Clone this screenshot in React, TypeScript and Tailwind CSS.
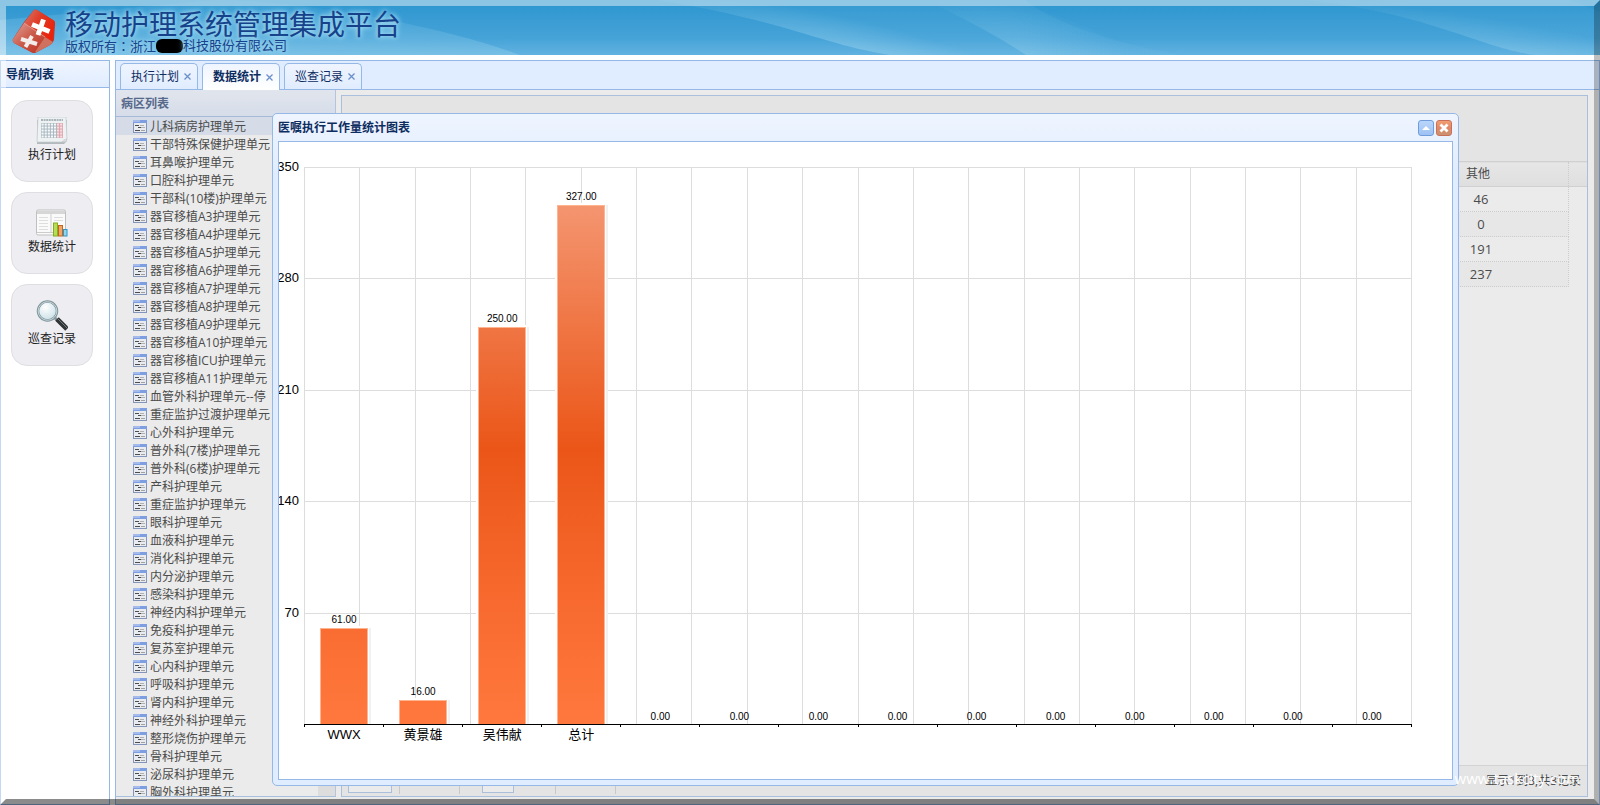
import React from 'react';

const wards: string[] = [
  '儿科病房护理单元',
  '干部特殊保健护理单元',
  '耳鼻喉护理单元',
  '口腔科护理单元',
  '干部科(10楼)护理单元',
  '器官移植A3护理单元',
  '器官移植A4护理单元',
  '器官移植A5护理单元',
  '器官移植A6护理单元',
  '器官移植A7护理单元',
  '器官移植A8护理单元',
  '器官移植A9护理单元',
  '器官移植A10护理单元',
  '器官移植ICU护理单元',
  '器官移植A11护理单元',
  '血管外科护理单元--停',
  '重症监护过渡护理单元',
  '心外科护理单元',
  '普外科(7楼)护理单元',
  '普外科(6楼)护理单元',
  '产科护理单元',
  '重症监护护理单元',
  '眼科护理单元',
  '血液科护理单元',
  '消化科护理单元',
  '内分泌护理单元',
  '感染科护理单元',
  '神经内科护理单元',
  '免疫科护理单元',
  '复苏室护理单元',
  '心内科护理单元',
  '呼吸科护理单元',
  '肾内科护理单元',
  '神经外科护理单元',
  '整形烧伤护理单元',
  '骨科护理单元',
  '泌尿科护理单元',
  '胸外科护理单元',
];

const otherCounts = [46, 0, 191, 237];

const bars: { name: string; value: number }[] = [
  { name: 'WWX', value: 61 },
  { name: '黄景雄', value: 16 },
  { name: '吴伟献', value: 250 },
  { name: '总计', value: 327 },
  ...Array.from({ length: 10 }, () => ({ name: '', value: 0 })),
];

function Logo() {
  return (
    <svg className="h-11 w-11 shrink-0" viewBox="0 0 44 44" aria-hidden="true">
      <defs>
        <linearGradient id="cubeTop" x1="0" y1="0" x2="1" y2="0.6">
          <stop offset="0" stopColor="#d9786c" />
          <stop offset="0.5" stopColor="#e03a24" />
          <stop offset="1" stopColor="#ea220c" />
        </linearGradient>
        <linearGradient id="cubeFront" x1="0" y1="0" x2="1" y2="1">
          <stop offset="0" stopColor="#e2a198" />
          <stop offset="0.5" stopColor="#cb5a4a" />
          <stop offset="1" stopColor="#bb3020" />
        </linearGradient>
      </defs>
      <path d="M22 1 Q23 0 25 1 L41 11 Q43 12 43 14 L42 31 Q41 34 38 36 L25 43 Q22 45 19 43 L2 34 Q0 32 1 30 L12 13 Z" fill="#c23628" />
      <path d="M22 1 Q23 0 25 1 L41 11 Q43 12 43 14 L40 33 L33 28 L12 14 Z" fill="url(#cubeTop)" />
      <path d="M12 14 L33 28 L23 43 Q21 44 19 43 L2 34 Q0 32 1 30 Z" fill="url(#cubeFront)" />
      <path d="M33 28 L41 33 Q40 35 38 36 L25 43 L23 43 Z" fill="#d0705f" />
      <path d="M12 14 L33 28" stroke="#e8a79c" strokeWidth="0.8" />
      <path d="M20 15.500 L37.500 22.500 M31.500 10.500 L26 26" stroke="#ffffff" strokeWidth="5" />
      <path d="M9 30 L25 35 M20 27 L13.500 38" stroke="#f3ecea" strokeWidth="4" />
    </svg>
  );
}

function HeaderWaves() {
  return (
    <svg className="absolute inset-0 h-full w-full" viewBox="0 0 1600 55" preserveAspectRatio="none" aria-hidden="true">
      <defs>
        <radialGradient id="waveA" gradientUnits="userSpaceOnUse" cx="0" cy="0" r="1" gradientTransform="translate(870 62) rotate(14) scale(210 38)">
          <stop offset="0" stopColor="#a9dcf2" stopOpacity="0.5" />
          <stop offset="1" stopColor="#a9dcf2" stopOpacity="0.06" />
        </radialGradient>
        <radialGradient id="waveB" gradientUnits="userSpaceOnUse" cx="0" cy="0" r="1" gradientTransform="translate(1020 55) rotate(12) scale(130 50)">
          <stop offset="0" stopColor="#a9dcf2" stopOpacity="0.3" />
          <stop offset="1" stopColor="#a9dcf2" stopOpacity="0" />
        </radialGradient>
        <radialGradient id="waveC" gradientUnits="userSpaceOnUse" cx="0" cy="0" r="1" gradientTransform="translate(1510 56) rotate(10) scale(230 34)">
          <stop offset="0" stopColor="#a9dcf2" stopOpacity="0.35" />
          <stop offset="1" stopColor="#a9dcf2" stopOpacity="0.05" />
        </radialGradient>
        <linearGradient id="waveLeft" x1="0" y1="1" x2="0.300" y2="0">
          <stop offset="0" stopColor="#a9dcf2" stopOpacity="0.4" />
          <stop offset="1" stopColor="#a9dcf2" stopOpacity="0.05" />
        </linearGradient>
      </defs>
      <path d="M215 0 C300 0 440 25 520 55 L0 55 L0 20 Z" fill="url(#waveLeft)" />
      <path d="M658 0 C790 22 820 44 890 55 L1180 55 C1100 40 1050 20 1025 0 Z" fill="url(#waveA)" />
      <path d="M923 0 C960 15 1000 38 1026 55 L1180 55 C1120 40 1060 20 1025 0 Z" fill="url(#waveB)" />
      <path d="M1305 0 C1430 13 1480 48 1535 55 L1600 55 L1600 12 L1570 0 Z" fill="url(#waveC)" />
    </svg>
  );
}

function CalendarIcon() {
  return (
    <svg className="h-7 w-8" viewBox="0 0 32 28" aria-hidden="true">
      <path d="M1 3 H31 V24 L28 27 H1 Z" fill="#b3b9bc" />
      <path d="M2 0 H30 L31 22 Q31 25 26 25 H1 Z" fill="#eef2f3" stroke="#c3cbcf" strokeWidth="0.7" />
      <path d="M5 3 H27" stroke="#a9b5ba" strokeWidth="2" strokeDasharray="2 0.6" />
      <rect x="5" y="6" width="16" height="15" fill="#a4b4bd" />
      <rect x="21" y="6" width="6" height="15" fill="#d9a0a9" />
      {[0, 1, 2, 3, 4].map((r) =>
        [0, 1, 2, 3, 4, 5, 6].map((c) => (
          <rect key={`${r}-${c}`} x={5.5 + c * 3.1} y={6.5 + r * 3} width="2.2" height="2.1" fill={c > 4 ? '#fbdce1' : '#f7f9fa'} />
        )),
      )}
      <path d="M26 25 Q27 22 31 22 L26 25" fill="#fff" stroke="#b6bdc0" strokeWidth="0.5" />
    </svg>
  );
}

function StatsIcon() {
  return (
    <svg className="h-7 w-8" viewBox="0 0 32 28" aria-hidden="true">
      <rect x="0.5" y="1" width="29" height="25" rx="1.5" fill="#fafafa" stroke="#bfbfbf" />
      <path d="M1 2 H29 V5 H1 Z" fill="#d6d6d6" />
      <path d="M15 5 V24" stroke="#cfcfcf" />
      <path d="M1 23.500 H29" stroke="#cccccc" />
      <path d="M3 8.500 H12 M3 11.500 H12 M3 14.500 H12 M3 17.500 H12 M3 20.500 H12 M18 8.500 H27 M18 11.500 H27" stroke="#dddddd" />
      <rect x="17.500" y="14" width="4" height="13" fill="#b9dc55" stroke="#83ad22" />
      <rect x="22.500" y="16.500" width="4" height="10.500" fill="#f0a765" stroke="#c4651c" />
      <rect x="27.500" y="20.500" width="3.500" height="6.500" fill="#8bd6f2" stroke="#3196c4" />
    </svg>
  );
}

function SearchIcon() {
  return (
    <svg className="h-8 w-8" viewBox="0 0 32 32" aria-hidden="true">
      <defs>
        <radialGradient id="lens" cx="0.4" cy="0.3" r="0.8">
          <stop offset="0" stopColor="#ffffff" />
          <stop offset="1" stopColor="#c3dce4" />
        </radialGradient>
      </defs>
      <path d="M17 17 L22 22" stroke="#8b999d" strokeWidth="3" />
      <path d="M21 20 L31 30" stroke="#303436" strokeWidth="5" />
      <path d="M21 19 L31 29" stroke="#747a7c" strokeWidth="1" />
      <circle cx="11.500" cy="12" r="9.500" fill="url(#lens)" stroke="#80969d" strokeWidth="2.500" />
      <circle cx="11.500" cy="12" r="9.300" fill="none" stroke="#c6d5da" strokeWidth="1" />
    </svg>
  );
}

function WardIcon() {
  return (
    <svg className="h-[13px] w-[14px] shrink-0" viewBox="0 0 14 13" shapeRendering="crispEdges" aria-hidden="true">
      <rect width="14" height="13" fill="#8495bb" />
      <rect x="1" y="3" width="12" height="9" fill="#e8ebf0" />
      <rect width="14" height="3" fill="#7d9ee0" />
      <rect width="7" height="2" fill="#a3baea" />
      <rect x="2" y="5" width="4" height="1" fill="#4d4d4d" />
      <rect x="7" y="5" width="4" height="1" fill="#b0b0b0" />
      <rect x="5" y="7" width="3" height="1" fill="#4d4d4d" />
      <rect x="8" y="7" width="4" height="1" fill="#b0b0b0" />
      <rect x="2" y="10" width="5" height="1" fill="#4d4d4d" />
      <rect x="8" y="10" width="4" height="1" fill="#a0a0a0" />
    </svg>
  );
}

const navItems = [
  { label: '执行计划', icon: <CalendarIcon /> },
  { label: '数据统计', icon: <StatsIcon /> },
  { label: '巡查记录', icon: <SearchIcon /> },
];

function Tab({ label, active = false }: { label: string; active?: boolean }) {
  return (
    <div
      className={
        active
          ? 'relative top-px flex h-[27px] w-[78px] items-center justify-between rounded-t-[5px] border border-b-0 border-[#95b8e7] bg-gradient-to-b from-[#eff5ff] to-white pl-[10px] pr-1'
          : 'flex h-[26px] w-[78px] items-center justify-between rounded-t-[5px] border border-b-0 border-[#95b8e7] bg-gradient-to-b from-[#eff5ff] to-[#e0ecff] pl-[10px] pr-1'
      }
    >
      <button type="button" role="tab" aria-selected={active} className={active ? 'font-bold' : ''}>
        {label}
      </button>
      <button type="button" aria-label={`关闭${label}`} className="flex h-3 w-3 items-center justify-center">
        <svg className="h-[7px] w-[7px]" viewBox="0 0 7 7" aria-hidden="true">
          <path d="M0.500 0.500 L6.500 6.500 M6.500 0.500 L0.500 6.500" stroke="#6a8fca" strokeWidth="1.300" />
        </svg>
      </button>
    </div>
  );
}

function Chart() {
  const left = 25;
  const right = 1132;
  const top = 25;
  const bottom = 582;
  const slot = (right - left) / bars.length;
  const cell = (right - left) / 20;
  const rows = [350, 280, 210, 140, 70];
  return (
    <svg className="block h-full w-full" viewBox="0 0 1173 636" preserveAspectRatio="xMinYMin meet" role="img" aria-label="医嘱执行工作量统计图表">
      <defs>
        <linearGradient id="bar" gradientUnits="userSpaceOnUse" x1="0" y1="62" x2="0" y2={bottom}>
          <stop offset="0" stopColor="#f49570" />
          <stop offset="0.47" stopColor="#eb5618" />
          <stop offset="0.800" stopColor="#f96c31" />
          <stop offset="1" stopColor="#ff783d" />
        </linearGradient>
      </defs>
      <g stroke="#dddddd" shapeRendering="crispEdges">
        {rows.map((v, i) => (
          <path key={v} d={`M${left} ${Math.round(top + i * 111.4) + 0.5} H${right + 1}`} />
        ))}
        {Array.from({ length: 21 }, (_, i) => (
          <path key={i} d={`M${Math.round(left + i * cell) + 0.5} ${top} V${bottom}`} />
        ))}
      </g>
      <g fontFamily="'Liberation Sans', sans-serif" fontSize="13" textAnchor="end">
        {rows.map((v, i) => (
          <text key={v} x="20" y={Math.round(top + i * 111.4) + 4}>
            {v}
          </text>
        ))}
      </g>
      {bars.map((b, i) => {
        const center = left + 0.5 + slot * (i + 0.5);
        const x = Math.round(center) - 24;
        const y = Math.round(bottom - (b.value * (bottom - top)) / 350) + 1;
        return (
          <g key={i}>
            {b.value > 0 && (
              <>
                <rect x={x - 2} y={y - 2} width="53" height={bottom - y + 2} fill="#ffffff" />
                <rect x={x + 49} y={y} width="2" height={bottom - y} fill="#f1f1f1" />
                <rect x={x} y={y} width="48" height={bottom - y} fill="#ffb38f" />
                <rect x={x + 1} y={y + 1} width="46" height={bottom - y - 1} fill="url(#bar)" />
              </>
            )}
            <text x={center} y={y - 5} fontFamily="'Liberation Sans', sans-serif" fontSize="10" textAnchor="middle">
              {b.value.toFixed(2)}
            </text>
            <text x={center} y="597" fontFamily="'Liberation Sans', 'Noto Sans CJK SC', sans-serif" fontSize="13" textAnchor="middle">
              {b.name}
            </text>
          </g>
        );
      })}
      <g stroke="#000000" shapeRendering="crispEdges">
        <path d={`M${left} ${bottom + 0.5} H${right + 1}`} />
        {Array.from({ length: 15 }, (_, i) => (
          <path key={i} d={`M${Math.round(left + i * slot) + 0.5} ${bottom} V${bottom + 3}`} />
        ))}
      </g>
    </svg>
  );
}

function ChartWindow() {
  return (
    <section className="absolute bottom-[19px] left-[272px] right-[141px] top-[113px] flex flex-col rounded-[5px] border border-[#95b8e7] bg-[#e0ecff] bg-gradient-to-b from-[#eff5ff] to-[#e0ecff] to-[60px] px-[5px] pb-[5px]">
      <header className="flex h-[27px] shrink-0 items-center justify-between pr-px">
        <h2 className="pt-px font-bold">医嘱执行工作量统计图表</h2>
        <div className="flex gap-[2px]">
          <button type="button" aria-label="折叠" className="flex h-4 w-4 items-center justify-center rounded-[3px] border border-[#6f9cdc] bg-gradient-to-b from-[#b9d5fb] to-[#9fc2f3]">
            <svg className="h-1 w-2" viewBox="0 0 8 4" aria-hidden="true">
              <path d="M4 0 L8 4 H0 Z" fill="#fff" />
            </svg>
          </button>
          <button type="button" aria-label="关闭" className="flex h-4 w-4 items-center justify-center rounded-[3px] border border-[#c9705a] bg-gradient-to-b from-[#f2a070] via-[#e0886a] to-[#c9936f]">
            <svg className="h-[10px] w-[10px]" viewBox="0 0 10 10" aria-hidden="true">
              <path d="M1.500 1.500 L8.500 8.500 M8.500 1.500 L1.500 8.500" stroke="#fff" strokeWidth="2.800" />
            </svg>
          </button>
        </div>
      </header>
      <div className="min-h-0 grow overflow-hidden border border-[#95b8e7] bg-white">
        <Chart />
      </div>
    </section>
  );
}

export default function App() {
  return (
    <div className="relative flex h-screen flex-col overflow-hidden bg-white font-['Open_Sans','Noto_Sans_CJK_SC',sans-serif] text-xs text-[#0e2d5f]">
      <header className="relative flex h-[55px] shrink-0 items-center gap-[9px] bg-gradient-to-b from-[#2f97d0] from-10% via-[#46a3d8] via-70% to-[#61b2e0] pl-3 pt-[6px]">
        <HeaderWaves />
        <div className="relative">
          <Logo />
        </div>
        <div className="relative text-[#15428b] [text-shadow:0_0_6px_#a5dcf2,0_0_4px_#a5dcf2]">
          <h1 className="text-[28px] leading-[30px]">移动护理系统管理集成平台</h1>
          <p className="flex items-center text-[13px] leading-[13px]">
            <span className="font-['Noto_Sans_CJK_SC',sans-serif]">
              版权所有<span lang="zh-TW" className="font-['Noto_Sans_CJK_TC',sans-serif]">：</span>浙江
            </span>
            <span className="h-[14px] w-[27px] rounded-[6px] bg-black" />
            <span>科技股份有限公司</span>
          </p>
        </div>
      </header>

      <div className="flex min-h-0 grow gap-[5px] pt-[5px]">
        <nav className="flex w-[110px] shrink-0 flex-col border border-[#95b8e7] bg-white">
          <h2 className="flex h-[27px] shrink-0 items-center border-b border-[#95b8e7] bg-gradient-to-b from-[#eff5ff] to-[#e0ecff] pl-[5px] pt-[2px] font-bold">导航列表</h2>
          <div className="flex flex-col gap-[10px] pl-[10px] pt-3">
            {navItems.map((item) => (
              <button
                key={item.label}
                type="button"
                className="flex h-[82px] w-[82px] flex-col items-center justify-center rounded-[16px] border border-[#dfdee2] bg-[#eeedf2] pb-1 text-[#222222]"
              >
                <span className="flex h-8 items-center">{item.icon}</span>
                <span className="leading-4">{item.label}</span>
              </button>
            ))}
          </div>
        </nav>

        <main className="flex min-w-0 grow flex-col border border-[#95b8e7] bg-[#ebebeb]">
          <div role="tablist" className="flex h-[29px] shrink-0 items-end gap-1 border-b border-[#95b8e7] bg-[#e0ecff] pl-1">
            <Tab label="执行计划" />
            <Tab label="数据统计" active />
            <Tab label="巡查记录" />
          </div>

          <div className="flex min-h-0 grow gap-[5px] pb-[7px] pr-[11px]">
            <aside className="flex w-[220px] shrink-0 flex-col border-b border-r border-b-[#a9c0dd] border-r-[#b4c4da]">
              <h2 className="flex h-[27px] shrink-0 items-center border-b border-[#a4bad9] bg-gradient-to-b from-[#e1e5ed] to-[#d6dde9] pl-[5px] pt-[2px] font-bold text-[#56698b]">病区列表</h2>
              <div className="flex min-h-0 grow">
                <ul className="min-w-0 grow overflow-hidden text-[#4b4b4b]">
                  {wards.map((ward, i) => (
                    <li key={ward} className={i === 0 ? 'bg-[#d5dce7]' : ''}>
                      <button type="button" className="flex h-[18px] w-full items-center gap-[3px] whitespace-nowrap pl-[17px]">
                        <WardIcon />
                        <span className="pt-[2px]">{ward}</span>
                      </button>
                    </li>
                  ))}
                </ul>
                <div className="w-[17px] shrink-0 bg-[#dddddd]" />
              </div>
            </aside>

            <section className="mt-[5px] flex min-w-0 grow flex-col border border-[#a9bfdc] text-[#4b4b4b]">
              <div className="h-[65px] shrink-0 bg-[#e4e4e4]" />
              <div className="min-h-0 grow">
                <table className="w-full table-fixed border-collapse">
                  <thead>
                    <tr className="h-[25px] border-y border-[#d0d0d0] bg-gradient-to-b from-[#e6e6e6] to-[#dfdfdf]">
                      <td />
                      <th className="w-[112px] border-r border-dotted border-r-[#cccccc] pl-[10px] text-left font-normal">其他</th>
                      <td className="w-[19px]" />
                    </tr>
                  </thead>
                  <tbody className="text-[13px]">
                    {otherCounts.map((n, i) => (
                      <tr key={n} className="h-[25px]">
                        <td />
                        <td
                          className={
                            i % 2
                              ? 'border-b border-r border-dotted border-[#cccccc] bg-[#e7e7e7] pl-[7px]'
                              : 'border-b border-r border-dotted border-[#cccccc] pl-[7px]'
                          }
                        >
                          <div className="w-9 text-center leading-5">{n}</div>
                        </td>
                        <td />
                      </tr>
                    ))}
                  </tbody>
                </table>
              </div>
              <footer className="flex h-[31px] shrink-0 items-center justify-between border-t border-[#d3d3d3] bg-[#e4e4e4] px-[6px]">
                <div className="flex items-center">
                  <select aria-label="每页记录数" className="h-6 w-11 border border-[#a9bfdc] bg-[#ebebeb]">
                    <option>10</option>
                  </select>
                  <span className="ml-[7px] h-[26px] w-px bg-[#c8c8c8]" />
                  <span className="ml-[59px] h-[26px] w-px bg-[#c8c8c8]" />
                  <input aria-label="页码" defaultValue="1" className="ml-[22px] h-6 w-8 border border-[#a9bfdc] bg-[#ebebeb] px-1" />
                  <span className="ml-[41px] h-[26px] w-px bg-[#c8c8c8]" />
                  <span className="ml-[59px] h-[26px] w-px bg-[#c8c8c8]" />
                </div>
                <p className="whitespace-nowrap">显示1到3,共3记录</p>
              </footer>
            </section>
          </div>
        </main>
      </div>

      <ChartWindow />

      <p className="pointer-events-none absolute bottom-[17px] right-5 text-[15px] leading-5 text-white">www.taskcity.com</p>
      <div className="pointer-events-none absolute inset-0 border-[6px] border-b-[#000000]/45 border-l-[#ffffff]/45 border-r-[#000000]/25 border-t-[#ffffff]/45" />
    </div>
  );
}
